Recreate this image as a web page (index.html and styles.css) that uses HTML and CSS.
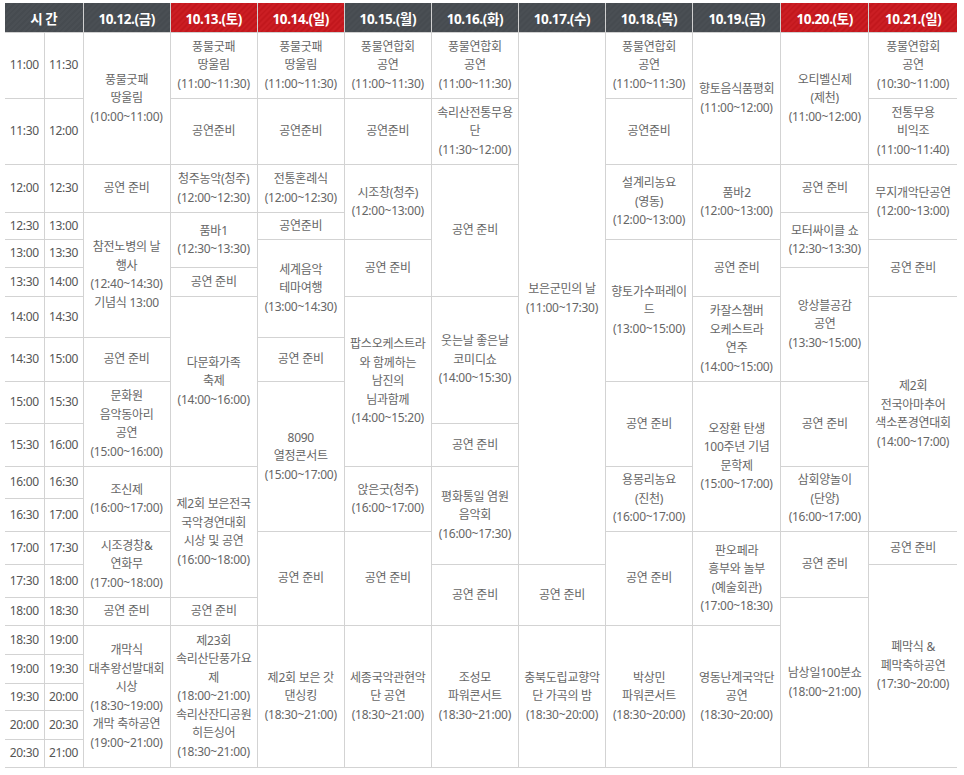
FILE: index.html
```html
<!DOCTYPE html>
<html lang="ko">
<head>
<meta charset="utf-8">
<title>공연 일정표</title>
<link rel="stylesheet" href="styles.css">
</head>
<body>
<div class="wrap">
<table class="sched">
<colgroup>
<col class="c-time"><col class="c-time">
<col class="c-day"><col class="c-day"><col class="c-day"><col class="c-day"><col class="c-day">
<col class="c-day"><col class="c-day"><col class="c-day2"><col class="c-day2"><col class="c-day2">
</colgroup>
<thead>
<tr>
<th colspan="2" class="dark">시 간</th>
<th class="dark">10.12.(금)</th>
<th class="red">10.13.(토)</th>
<th class="red">10.14.(일)</th>
<th class="dark">10.15.(월)</th>
<th class="dark">10.16.(화)</th>
<th class="dark">10.17.(수)</th>
<th class="dark">10.18.(목)</th>
<th class="dark">10.19.(금)</th>
<th class="red">10.20.(토)</th>
<th class="red">10.21.(일)</th>
</tr>
</thead>
<tbody>
<tr class="r1">
<td class="t">11:00</td><td class="t">11:30</td>
<td rowspan="2">풍물굿패<br>땅울림<br>(10:00~11:00)</td>
<td>풍물굿패<br>땅울림<br>(11:00~11:30)</td>
<td>풍물굿패<br>땅울림<br>(11:00~11:30)</td>
<td>풍물연합회<br>공연<br>(11:00~11:30)</td>
<td>풍물연합회<br>공연<br>(11:00~11:30)</td>
<td rowspan="13">보은군민의 날<br>(11:00~17:30)</td>
<td>풍물연합회<br>공연<br>(11:00~11:30)</td>
<td rowspan="2">향토음식품평회<br>(11:00~12:00)</td>
<td rowspan="2">오티벨신제<br>(제천)<br>(11:00~12:00)</td>
<td>풍물연합회<br>공연<br>(10:30~11:00)</td>
</tr>
<tr class="r2">
<td class="t">11:30</td><td class="t">12:00</td>
<td>공연준비</td>
<td>공연준비</td>
<td>공연준비</td>
<td>속리산전통무용<br>단<br>(11:30~12:00)</td>
<td>공연준비</td>
<td>전통무용<br>비익조<br>(11:00~11:40)</td>
</tr>
<tr class="r3">
<td class="t">12:00</td><td class="t">12:30</td>
<td>공연 준비</td>
<td>청주농악(청주)<br>(12:00~12:30)</td>
<td>전통혼례식<br>(12:00~12:30)</td>
<td rowspan="2">시조창(청주)<br>(12:00~13:00)</td>
<td rowspan="4">공연 준비</td>
<td rowspan="2">설계리농요<br>(영동)<br>(12:00~13:00)</td>
<td rowspan="2">품바2<br>(12:00~13:00)</td>
<td>공연 준비</td>
<td rowspan="2">무지개악단공연<br>(12:00~13:00)</td>
</tr>
<tr class="r4">
<td class="t">12:30</td><td class="t">13:00</td>
<td rowspan="4">참전노병의 날<br>행사<br>(12:40~14:30)<br>기념식 13:00</td>
<td rowspan="2">품바1<br>(12:30~13:30)</td>
<td>공연준비</td>
<td rowspan="2">모터싸이클 쇼<br>(12:30~13:30)</td>
</tr>
<tr class="r5">
<td class="t">13:00</td><td class="t">13:30</td>
<td rowspan="3">세계음악<br>테마여행<br>(13:00~14:30)</td>
<td rowspan="2">공연 준비</td>
<td rowspan="4">향토가수퍼레이<br>드<br>(13:00~15:00)</td>
<td rowspan="2">공연 준비</td>
<td rowspan="2">공연 준비</td>
</tr>
<tr class="r6">
<td class="t">13:30</td><td class="t">14:00</td>
<td>공연 준비</td>
<td rowspan="3">앙상블공감<br>공연<br>(13:30~15:00)</td>
</tr>
<tr class="r7">
<td class="t">14:00</td><td class="t">14:30</td>
<td rowspan="4">다문화가족<br>축제<br>(14:00~16:00)</td>
<td rowspan="4">팝스오케스트라<br>와 함께하는<br>남진의<br>님과함께<br>(14:00~15:20)</td>
<td rowspan="3">웃는날 좋은날<br>코미디쇼<br>(14:00~15:30)</td>
<td rowspan="2">카잘스챔버<br>오케스트라<br>연주<br>(14:00~15:00)</td>
<td rowspan="6">제2회<br>전국아마추어<br>색소폰경연대회<br>(14:00~17:00)</td>
</tr>
<tr class="r8">
<td class="t">14:30</td><td class="t">15:00</td>
<td>공연 준비</td>
<td>공연 준비</td>
</tr>
<tr class="r9">
<td class="t">15:00</td><td class="t">15:30</td>
<td rowspan="2">문화원<br>음악동아리<br>공연<br>(15:00~16:00)</td>
<td rowspan="4">8090<br>열정콘서트<br>(15:00~17:00)</td>
<td rowspan="2">공연 준비</td>
<td rowspan="4">오장환 탄생<br>100주년 기념<br>문학제<br>(15:00~17:00)</td>
<td rowspan="2">공연 준비</td>
</tr>
<tr class="r10">
<td class="t">15:30</td><td class="t">16:00</td>
<td>공연 준비</td>
</tr>
<tr class="r11">
<td class="t">16:00</td><td class="t">16:30</td>
<td rowspan="2">조신제<br>(16:00~17:00)</td>
<td rowspan="4">제2회 보은전국<br>국악경연대회<br>시상 및 공연<br>(16:00~18:00)</td>
<td rowspan="2">앉은굿(청주)<br>(16:00~17:00)</td>
<td rowspan="3">평화통일 염원<br>음악회<br>(16:00~17:30)</td>
<td rowspan="2">용몽리농요<br>(진천)<br>(16:00~17:00)</td>
<td rowspan="2">삼회양놀이<br>(단양)<br>(16:00~17:00)</td>
</tr>
<tr class="r12">
<td class="t">16:30</td><td class="t">17:00</td>
</tr>
<tr class="r13">
<td class="t">17:00</td><td class="t">17:30</td>
<td rowspan="2">시조경창&amp;<br>연화무<br>(17:00~18:00)</td>
<td rowspan="3">공연 준비</td>
<td rowspan="3">공연 준비</td>
<td rowspan="3">공연 준비</td>
<td rowspan="3">판오페라<br>흥부와 놀부<br>(예술회관)<br>(17:00~18:30)</td>
<td rowspan="2">공연 준비</td>
<td>공연 준비</td>
</tr>
<tr class="r14">
<td class="t">17:30</td><td class="t">18:00</td>
<td rowspan="2">공연 준비</td>
<td rowspan="2">공연 준비</td>
<td rowspan="7">폐막식 &amp;<br>폐막축하공연<br>(17:30~20:00)</td>
</tr>
<tr class="r15">
<td class="t">18:00</td><td class="t">18:30</td>
<td>공연 준비</td>
<td>공연 준비</td>
<td rowspan="6">남상일100분쇼<br>(18:00~21:00)</td>
</tr>
<tr class="r16">
<td class="t">18:30</td><td class="t">19:00</td>
<td rowspan="5">개막식<br>대추왕선발대회<br>시상<br>(18:30~19:00)<br>개막 축하공연<br>(19:00~21:00)</td>
<td rowspan="5">제23회<br>속리산단풍가요<br>제<br>(18:00~21:00)<br>속리산잔디공원<br>히든싱어<br>(18:30~21:00)</td>
<td rowspan="5">제2회 보은 갓<br>댄싱킹<br>(18:30~21:00)</td>
<td rowspan="5">세종국악관현악<br>단 공연<br>(18:30~21:00)</td>
<td rowspan="5">조성모<br>파워콘서트<br>(18:30~21:00)</td>
<td rowspan="5">충북도립교향악<br>단 가곡의 밤<br>(18:30~20:00)</td>
<td rowspan="5">박상민<br>파워콘서트<br>(18:30~20:00)</td>
<td rowspan="5">영동난계국악단<br>공연<br>(18:30~20:00)</td>
</tr>
<tr class="r17">
<td class="t">19:00</td><td class="t">19:30</td>
</tr>
<tr class="r18">
<td class="t">19:30</td><td class="t">20:00</td>
</tr>
<tr class="r19">
<td class="t">20:00</td><td class="t">20:30</td>
</tr>
<tr class="r20">
<td class="t">20:30</td><td class="t">21:00</td>
</tr>
</tbody>
</table>
</div>
</body>
</html>
```

FILE: styles.css
```css
html, body {
  margin: 0;
  padding: 0;
  background: #ffffff;
}

body {
  font-family: "Noto Sans", "Noto Sans CJK KR", sans-serif;
}

.wrap {
  padding: 3px 0 0 5px;
}

.sched {
  border-collapse: collapse;
  table-layout: fixed;
  width: 952px;
  border-left: hidden;
  border-right: hidden;
  border-top: hidden;
}

.c-time { width: 39px; }
.c-day { width: 87px; }
.c-day2 { width: 88px; }

.sched th {
  height: 29px;
  padding: 0;
  color: #ffffff;
  font-size: 13.5px;
  font-weight: 700;
  letter-spacing: -0.4px;
  border: 1px solid #d0d0d0;
  text-align: center;
  vertical-align: middle;
}

.sched th.dark {
  background: repeating-linear-gradient(135deg, #4a4f54 0 2px, #464b50 2px 4px);
}

.sched th.red {
  background: repeating-linear-gradient(135deg, #cb1e24 0 2px, #c2171d 2px 4px);
}

.sched td {
  border: 1px solid #d3d3d3;
  padding: 0 1px;
  text-align: center;
  vertical-align: middle;
  font-size: 12px;
  line-height: 18.5px;
  letter-spacing: -0.25px;
  color: #666666;
  white-space: nowrap;
}

.sched td.t {
  color: #555555;
  font-size: 12px;
  letter-spacing: -0.3px;
}

.r1 { height: 66px; }
.r2 { height: 66px; }
.r3 { height: 48px; }
.r4 { height: 27px; }
.r5 { height: 28px; }
.r6 { height: 29px; }
.r7 { height: 41px; }
.r8 { height: 44px; }
.r9 { height: 42px; }
.r10 { height: 43px; }
.r11 { height: 32px; }
.r12 { height: 33px; }
.r13 { height: 33px; }
.r14 { height: 33px; }
.r15 { height: 28px; }
.r16 { height: 29px; }
.r17 { height: 29px; }
.r18 { height: 27px; }
.r19 { height: 29px; }
.r20 { height: 28px; }
```
